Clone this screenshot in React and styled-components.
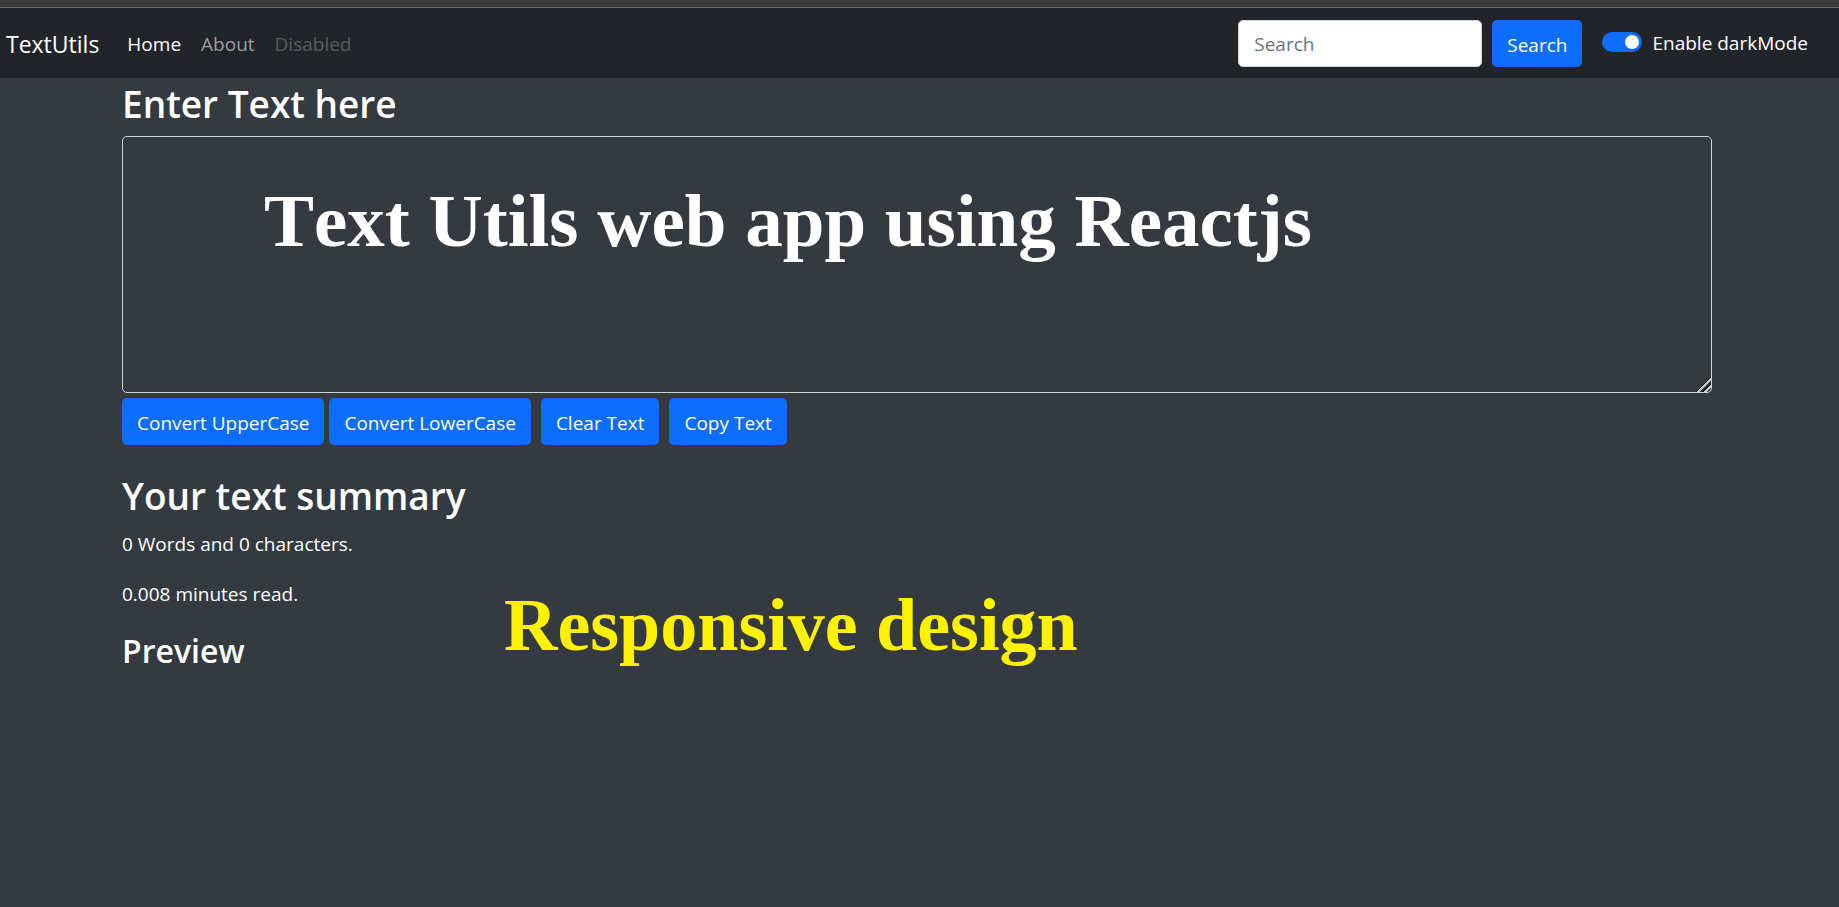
import React, { useState } from "react";
import styled, { createGlobalStyle } from "styled-components";

const GlobalStyle = createGlobalStyle`
  *, *::before, *::after { box-sizing: border-box; }
  body {
    margin: 0;
    min-height: 100vh;
    background: #343a40;
    color: #fff;
    font-family: "Segoe UI", "Open Sans", "Noto Sans", sans-serif;
    font-size: 19px;
    line-height: 30px;
  }
  h1, h2, p, ul { margin: 0; padding: 0; }
`;

const TopStrip = styled.div`
  height: 8px;
  background: #3b3b3b;
  border-bottom: 1px solid #6a6a6a;
`;

const Navbar = styled.nav`
  display: flex;
  align-items: center;
  padding: 12px 31px 11px 6px;
  background: #212529;
`;

const Brand = styled.a`
  margin-right: 18px;
  color: #fff;
  font-size: 23px;
  text-decoration: none;
`;

const NavList = styled.ul`
  display: flex;
  flex: 1;
  list-style: none;
`;

const NavLink = styled.a`
  display: block;
  padding: 0 10px;
  color: ${(p) => (p.$tone === "active" ? "#fff" : p.$tone === "disabled" ? "#585b5e" : "#9b9d9f")};
  text-decoration: none;
`;

const SearchForm = styled.form`
  display: flex;
  gap: 10px;
`;

const SearchInput = styled.input`
  width: 244px;
  height: 47px;
  padding: 0 15px;
  border: 1px solid #ced4da;
  border-radius: 5px;
  background: #fff;
  color: #212529;
  font: inherit;
  &::placeholder { color: #6c757d; opacity: 1; }
`;

const Button = styled.button`
  height: 47px;
  padding: 2px 15px 0;
  border: 0;
  border-radius: 5px;
  background: #0d6efd;
  color: #fff;
  font: inherit;
  white-space: nowrap;
  cursor: pointer;
`;

const SwitchLabel = styled.label`
  display: flex;
  align-items: center;
  gap: 10px;
  margin: 0 0 2px 20px;
  white-space: nowrap;
`;

const Switch = styled.input`
  appearance: none;
  display: flex;
  align-items: center;
  justify-content: ${(p) => (p.checked ? "flex-end" : "flex-start")};
  width: 40px;
  height: 20px;
  margin: 0 0 2px;
  padding: 3px;
  border-radius: 10px;
  background: ${(p) => (p.checked ? "#0d6efd" : "#6c757d")};
  &::before {
    content: "";
    width: 14px;
    height: 14px;
    border-radius: 50%;
    background: #fff;
  }
`;

const Page = styled.main`
  padding: 0 127px 0 122px;
`;

const Editor = styled.section`
  position: relative;
`;

const Title = styled.h1`
  margin-bottom: 6px;
  font-size: 37px;
  font-weight: 600;
  line-height: 52px;
`;

const TextBox = styled.textarea`
  display: block;
  width: 100%;
  height: 257px;
  padding: 7px 15px;
  border: 1px solid #ced4da;
  border-radius: 5px;
  background: transparent;
  color: #fff;
  font: inherit;
  resize: vertical;
  &::-webkit-resizer {
    background: linear-gradient(
      -45deg,
      transparent 3px,
      #c8c8c8 3px 5px,
      #16181a 5px 7px,
      transparent 7px 8px,
      #c8c8c8 8px 10px,
      #16181a 10px 11px,
      transparent 11px
    );
  }
`;

const Actions = styled.div`
  display: flex;
  flex-wrap: wrap;
  gap: 10px;
  margin-top: 5px;
`;

const ButtonPair = styled.div`
  display: flex;
  gap: 5px;
`;

const Summary = styled.section`
  position: relative;
  margin-top: 25px;
`;

const Paragraph = styled.p`
  margin-bottom: 18px;
  line-height: 32px;
`;

const PreviewTitle = styled.h2`
  font-size: 32px;
  font-weight: 600;
  line-height: 46px;
`;

const Caption = styled.div`
  position: absolute;
  top: ${(p) => p.$top}px;
  left: ${(p) => p.$left}px;
  color: ${(p) => p.$color};
  font: bold ${(p) => p.$size}px/84px "Liberation Serif", serif;
  font-kerning: none;
  white-space: nowrap;
  pointer-events: none;
`;

export default function App() {
  const [text, setText] = useState("");
  const [dark, setDark] = useState(true);
  return (
    <>
      <GlobalStyle />
      <TopStrip />
      <Navbar>
        <Brand href="#">TextUtils</Brand>
        <NavList>
          <li><NavLink href="#" $tone="active">Home</NavLink></li>
          <li><NavLink href="#">About</NavLink></li>
          <li><NavLink href="#" $tone="disabled" aria-disabled="true">Disabled</NavLink></li>
        </NavList>
        <SearchForm onSubmit={(e) => e.preventDefault()}>
          <SearchInput type="search" placeholder="Search" aria-label="Search" />
          <Button type="submit">Search</Button>
        </SearchForm>
        <SwitchLabel>
          <Switch type="checkbox" role="switch" checked={dark} onChange={() => setDark(!dark)} />
          Enable darkMode
        </SwitchLabel>
      </Navbar>
      <Page>
        <Editor>
          <Title as="h1"><label htmlFor="text">Enter Text here</label></Title>
          <TextBox id="text" value={text} onChange={(e) => setText(e.target.value)} />
          <Caption $top={101} $left={142} $size={75} $color="#fff">Text Utils web app using Reactjs</Caption>
        </Editor>
        <Actions>
          <ButtonPair>
            <Button type="button" onClick={() => setText(text.toUpperCase())}>Convert UpperCase</Button>
            <Button type="button" onClick={() => setText(text.toLowerCase())}>Convert LowerCase</Button>
          </ButtonPair>
          <Button type="button" onClick={() => setText("")}>Clear Text</Button>
          <Button type="button" onClick={() => navigator.clipboard.writeText(text)}>Copy Text</Button>
        </Actions>
        <Summary>
          <Title as="h2">Your text summary</Title>
          <Paragraph>{text.split(/\s+/).filter(Boolean).length} Words and {text.length} characters.</Paragraph>
          <Paragraph>{0.008 * text.split(" ").length} minutes read.</Paragraph>
          <PreviewTitle>Preview</PreviewTitle>
          <Paragraph>{text}</Paragraph>
          <Caption $top={113} $left={382} $size={74} $color="#fff200">Responsive design</Caption>
        </Summary>
      </Page>
    </>
  );
}
